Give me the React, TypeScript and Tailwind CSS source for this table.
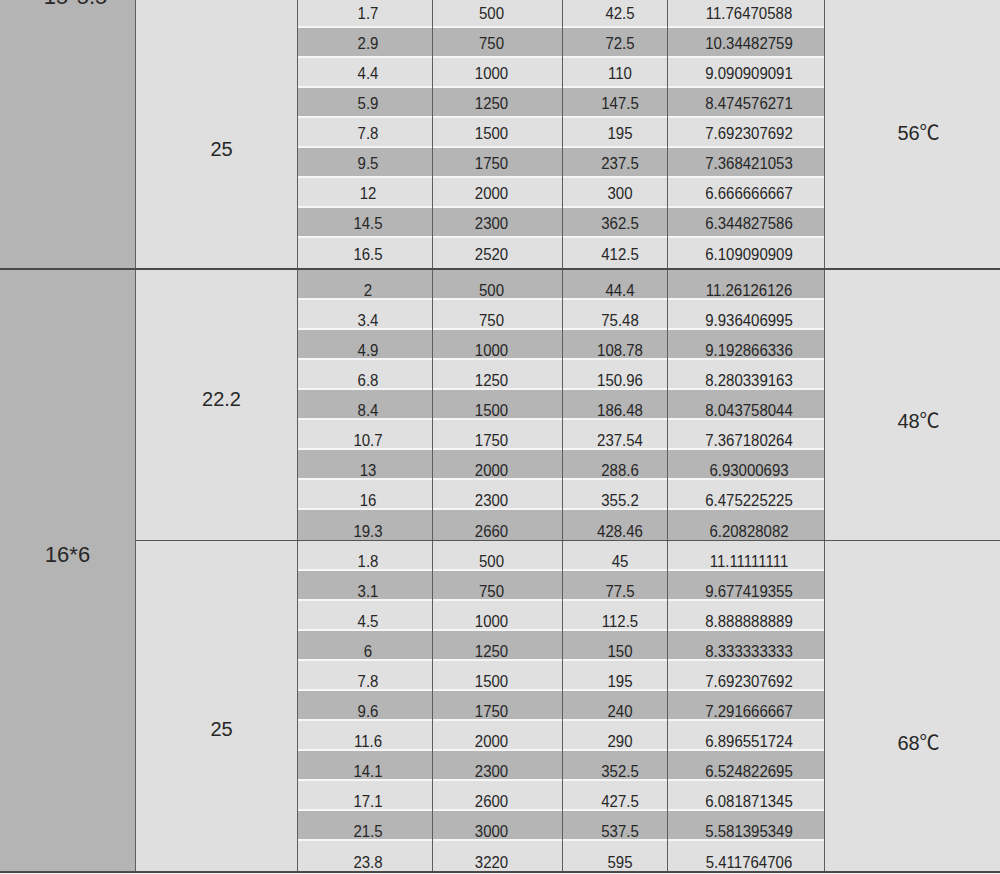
const line = 'bg-[#4a4a4a]'

type Row = [string, string, string, string]

const groupA: Row[] = [
  ['1.7', '500', '42.5', '11.76470588'],
  ['2.9', '750', '72.5', '10.34482759'],
  ['4.4', '1000', '110', '9.090909091'],
  ['5.9', '1250', '147.5', '8.474576271'],
  ['7.8', '1500', '195', '7.692307692'],
  ['9.5', '1750', '237.5', '7.368421053'],
  ['12', '2000', '300', '6.666666667'],
  ['14.5', '2300', '362.5', '6.344827586'],
  ['16.5', '2520', '412.5', '6.109090909'],
]

const groupB: Row[] = [
  ['2', '500', '44.4', '11.26126126'],
  ['3.4', '750', '75.48', '9.936406995'],
  ['4.9', '1000', '108.78', '9.192866336'],
  ['6.8', '1250', '150.96', '8.280339163'],
  ['8.4', '1500', '186.48', '8.043758044'],
  ['10.7', '1750', '237.54', '7.367180264'],
  ['13', '2000', '288.6', '6.93000693'],
  ['16', '2300', '355.2', '6.475225225'],
  ['19.3', '2660', '428.46', '6.20828082'],
]

const groupC: Row[] = [
  ['1.8', '500', '45', '11.11111111'],
  ['3.1', '750', '77.5', '9.677419355'],
  ['4.5', '1000', '112.5', '8.888888889'],
  ['6', '1250', '150', '8.333333333'],
  ['7.8', '1500', '195', '7.692307692'],
  ['9.6', '1750', '240', '7.291666667'],
  ['11.6', '2000', '290', '6.896551724'],
  ['14.1', '2300', '352.5', '6.524822695'],
  ['17.1', '2600', '427.5', '6.081871345'],
  ['21.5', '3000', '537.5', '5.581395349'],
  ['23.8', '3220', '595', '5.411764706'],
]

// column widths + small nudges so the numbers sit where the scan has them
const widths = ['w-[135px] pl-[6px]', 'w-[130px] pr-[12px]', 'w-[105px] pl-[10px]', 'w-[157px] pl-[6px]']

function DataRow({ row, dark, last, low }: { row: Row; dark: boolean; last: boolean; low: boolean }) {
  return (
    <div className="flex h-[30px]">
      {row.map((v, i) => (
        <div key={i} className={`${widths[i].split(' ')[0]} flex flex-col border-r border-[#5e5e5e]`}>
          <div
            className={`flex-1 flex items-center justify-center text-[15px] leading-none ${dark ? 'bg-[#b5b5b5]' : 'bg-[#e0e0e0]'} ${low ? 'pt-[10px]' : ''} ${widths[i].split(' ')[1]}`}
          >
            <span className="inline-block scale-y-[1.12]">{v}</span>
          </div>
          {!last && <div className="h-[2px] bg-[#f6f6f6]" />}
        </div>
      ))}
    </div>
  )
}

function Group({
  label, temp, rows, firstDark, labelPt, tempPt, low,
}: {
  label: string; temp: string; rows: Row[]; firstDark: boolean; labelPt: string; tempPt: string; low: boolean
}) {
  return (
    <div className="flex">
      <div className={`w-[162px] shrink-0 flex justify-center pl-[10px] border-r border-[#5e5e5e] bg-[#dfdfdf] text-[20px] leading-[23px] ${labelPt}`}>
        {label}
      </div>
      <div className="flex flex-col">
        {rows.map((r, i) => (
          <DataRow key={i} row={r} dark={(i % 2 === 0) === firstDark} last={i === rows.length - 1} low={low} />
        ))}
      </div>
      <div className={`flex-1 flex justify-center pl-[12px] bg-[#e0e0e0] text-[20px] leading-[23px] ${tempPt}`}>
        {temp}
      </div>
    </div>
  )
}

export default function App() {
  return (
    <div className="w-[1000px] h-[874px] overflow-hidden bg-[#f0f0f0] text-[#272727] font-['Liberation_Sans','Noto_Sans_CJK_SC',sans-serif]">
      <div className="-mt-[2px]">
        {/* 15*5.5 */}
        <div className="flex">
          <div className="w-[136px] shrink-0 flex flex-col items-center pl-[16px] border-r border-[#5e5e5e] bg-[#b4b4b4]">
            <span className="-mt-[12px] text-[22px] leading-none">15*5.5</span>
          </div>
          <div className="flex-1">
            <Group label="25" temp="56℃" rows={groupA} firstDark={false} labelPt="pt-[140px]" tempPt="pt-[124px]" low={false} />
          </div>
        </div>
        <div className={`h-[2px] ${line}`} />

        {/* 16*6 */}
        <div className="flex">
          <div className="w-[136px] shrink-0 flex justify-center pt-[272px] border-r border-[#5e5e5e] bg-[#b4b4b4]">
            <span className="text-[22px] leading-[25px]">16*6</span>
          </div>
          <div className="flex-1 flex flex-col">
            <Group label="22.2" temp="48℃" rows={groupB} firstDark={true} labelPt="pt-[118px]" tempPt="pt-[140px]" low={true} />
            <div className="h-px bg-[#555555]" />
            <Group label="25" temp="68℃" rows={groupC} firstDark={false} labelPt="pt-[177px]" tempPt="pt-[191px]" low={true} />
          </div>
        </div>
        <div className={`h-[2px] ${line}`} />
      </div>
    </div>
  )
}
